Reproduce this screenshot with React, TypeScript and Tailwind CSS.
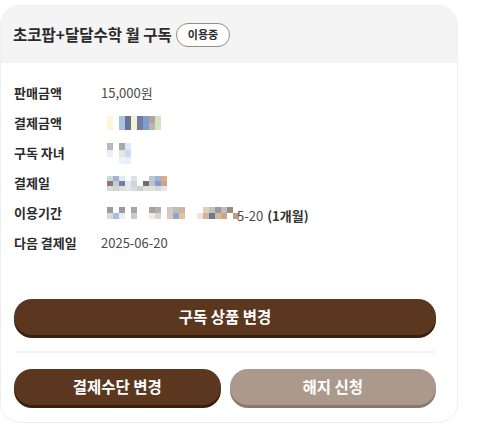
import React from "react";

const FONT = { fontFamily: '"Noto Sans CJK KR", "Noto Sans", sans-serif' };

// pixelated (blurred) values in the screenshot
const Pixels = ({ rows, w = 6, h = 7 }: { rows: string[][]; w?: number; h?: number }) => (
  <div className="flex flex-col">
    {rows.map((r, i) => (
      <div key={i} className="flex">
        {r.map((c, j) => (
          <div key={j} style={{ width: w, height: h, backgroundColor: c }} />
        ))}
      </div>
    ))}
  </div>
);

const W = "transparent";

const Row = ({ label, children }: { label: string; children: React.ReactNode }) => (
  <div className="flex h-[30px] items-center">
    <div className="w-[87px] text-[13px] font-bold text-[#2b2b2b]">{label}</div>
    <div className="flex items-center text-[13px] text-[#4a4a4a]">{children}</div>
  </div>
);

export default function App() {
  return (
    <div className="h-[424px] w-[500px] bg-white pt-[5px]" style={FONT}>
      <div className="flex h-[418px] w-[458px] flex-col overflow-hidden rounded-[20px] border border-[#eeeeee] bg-white">
        <div className="flex h-[57px] shrink-0 items-center gap-[4px] bg-[#f4f4f4] px-[12px]">
          <span className="text-[15.5px] font-bold text-[#2a2a2a]">초코팝+달달수학 월 구독</span>
          <span className="flex h-[24px] items-center rounded-full border border-[#9e8878] bg-white px-[11px] text-[11px] font-bold text-[#2a2a2a]">
            이용중
          </span>
        </div>

        <div className="flex flex-1 flex-col pl-[13px] pr-[21px] pt-[15px]">
          <Row label="판매금액">15,000원</Row>
          <Row label="결제금액">
            <Pixels
              w={6}
              rows={[
                [W, "#fbf6da", W, "#a9c1e2", "#6b7394", "#f6f1d4", "#6f7ba2", "#809dcf", "#b4a39b", "#d4e2c2"],
                [W, "#fbf6da", W, "#a9c1e2", "#6b7394", "#f6f1d4", "#6f7ba2", "#809dcf", "#b9b4b0", "#d4e2c2"],
              ]}
            />
          </Row>
          <Row label="구독 자녀">
            <Pixels
              w={6}
              rows={[
                [W, "#b9b9b9", W, "#a8a8a8", "#dfe9f6"],
                [W, "#e4f0fa", W, "#e6e6e6", "#c9daf2"],
                [W, W, W, "#eaf3fb", "#e6effa"],
              ]}
            />
          </Row>
          <Row label="결제일">
            <Pixels
              w={6}
              h={5}
              rows={[
                [W, "#c7dce0", "#9fb3d3", "#e0ecf7", W, "#d7e4ef", W, W, "#b7c7dd", "#9fb4cf", "#e2a984"],
                [W, "#8d7a72", "#c7ccd4", "#7b7f96", "#e0e8f5", "#d1d5da", W, "#6e6e6e", "#c2c2c2", "#7f9ccf", "#c6a98a"],
                [W, "#dadada", "#d4d4d4", "#e0e0e0", "#e6e6e6", "#d9d9d9", "#cfcfcf", "#e0e0e0", "#e0e0e0", "#d8d8d8", "#e6e6e6"],
              ]}
            />
          </Row>
          <Row label="이용기간">
            <Pixels
              w={6}
              h={6}
              rows={[
                [W, "#9c9c9c", W, "#9a9a9a", W, "#a6a6a6", W, W, "#a8a4a0", "#b0b0b0", W, "#d3c9c0", "#bcbcbc", "#c8b7a9", W, W, W, "#e4cfb8", "#c0c0c0", "#9a9a9a", "#bdbdbd", "#9e8b7c", W],
                [W, "#d7dcd0", "#a9bde0", "#e9eef6", W, "#c7ccd6", W, W, "#f4eade", "#d9d4cc", W, "#d7cbbd", "#8fa5c9", "#e4c2a0", W, W, "#efe4d5", "#d0b49a", "#6e7898", "#d8b79a", "#cfa582", W, "#c49b7a"],
              ]}
            />
            <span className="ml-[-2px] mt-[5px]">5-20</span>
            <span className="ml-[4px] mt-[5px] font-bold text-[#333]">(1개월)</span>
          </Row>
          <Row label="다음 결제일">2025-06-20</Row>

          <button className="mt-[41px] h-[36px] w-full shrink-0 rounded-full bg-[#5b3720] text-[15.5px] font-bold text-white shadow-[0_3px_0_#3a1f0e]">
            구독 상품 변경
          </button>
          <div className="mt-[16px] h-[2px] w-full bg-[#f4f4f4]" />
          <div className="mt-[16px] flex gap-[9px]">
            <button className="h-[36px] flex-1 rounded-full bg-[#5b3720] text-[15.5px] font-bold text-white shadow-[0_3px_0_#3a1f0e]">
              결제수단 변경
            </button>
            <button className="h-[36px] flex-1 rounded-full bg-[#ab998c] text-[15.5px] font-bold text-white shadow-[0_3px_0_#8c7869]">
              해지 신청
            </button>
          </div>
        </div>
      </div>
    </div>
  );
}
